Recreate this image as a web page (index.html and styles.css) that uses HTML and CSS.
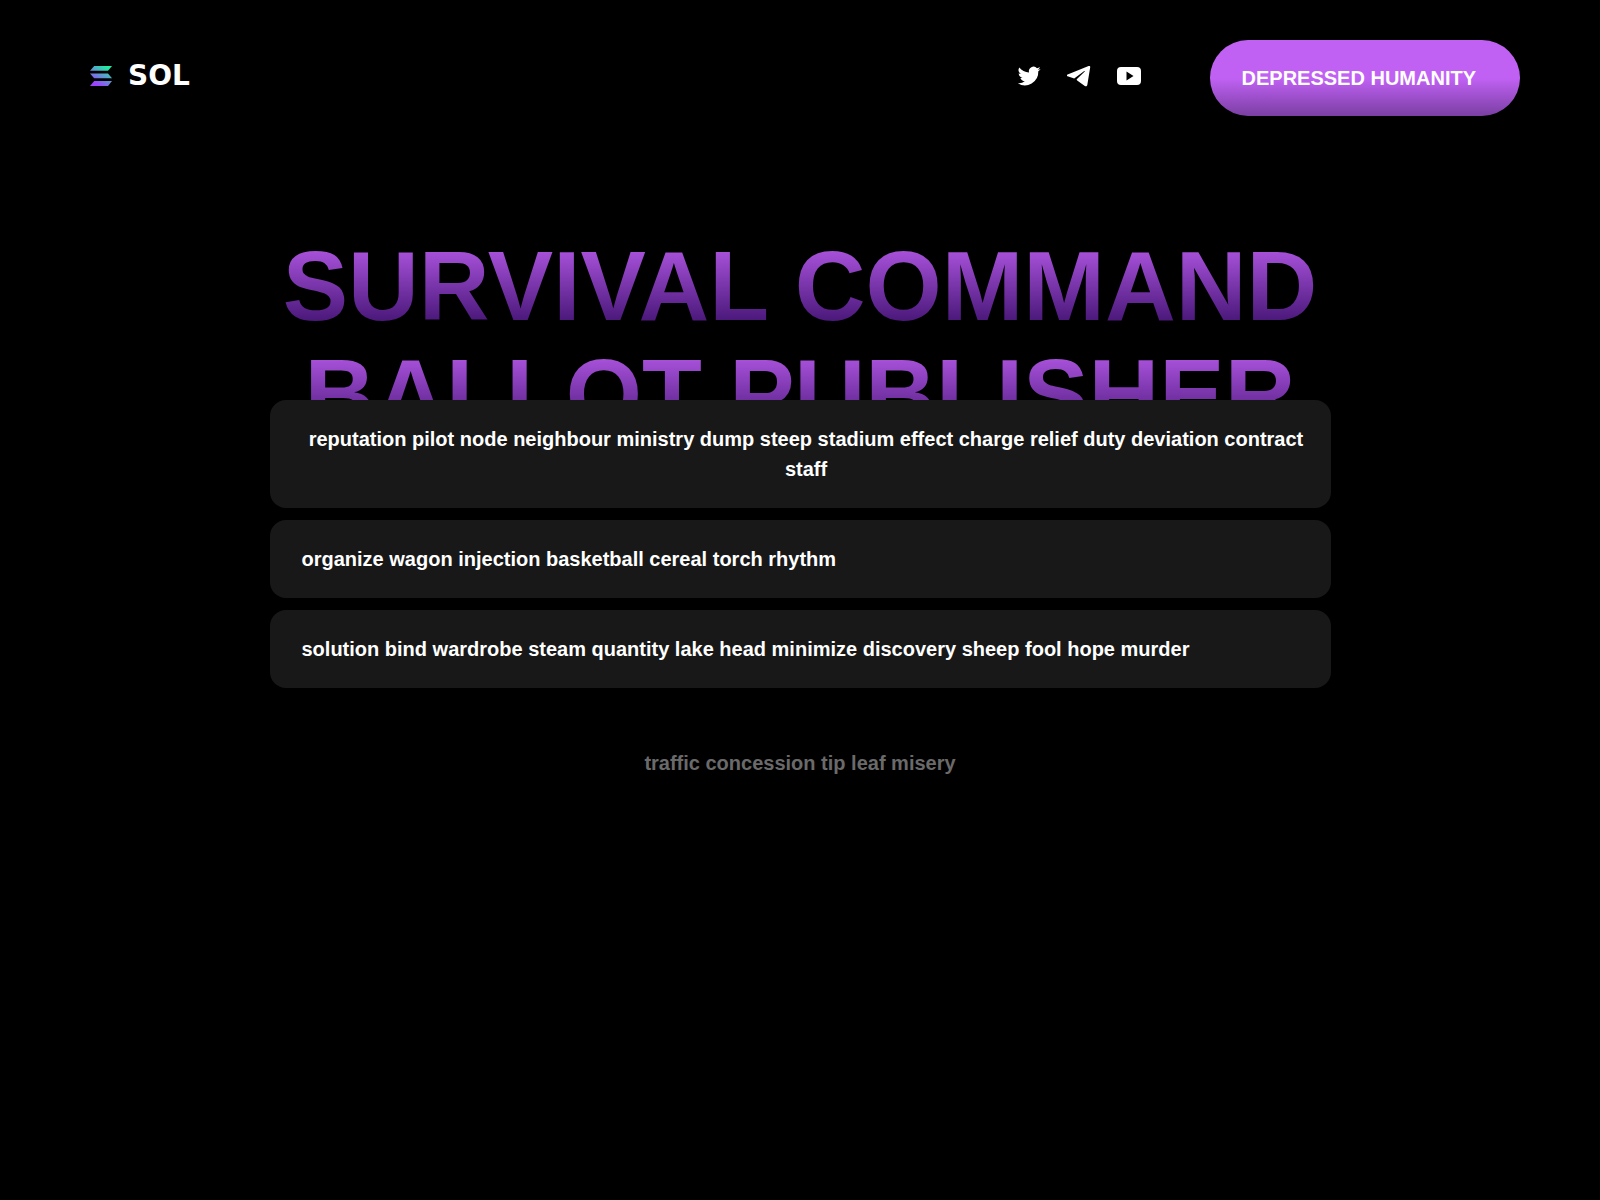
FILE: index.html
```html
<!DOCTYPE html>
<html lang="en">
<head>
  <meta charset="UTF-8" />
  <meta name="viewport" content="width=device-width, initial-scale=1.0"/>
  <title>SOL</title>
  <link rel="stylesheet" href="styles.css">
</head>
<body>
  <header class="header">
    <a href="#" class="logo">
      <svg class="logo-mark" viewBox="0 0 22 20" aria-hidden="true">
        <defs>
          <linearGradient id="solGradient" gradientUnits="userSpaceOnUse" x1="18" y1="1" x2="7" y2="18">
            <stop offset="0" stop-color="#1df0a0"/>
            <stop offset="1" stop-color="#9945ff"/>
          </linearGradient>
        </defs>
        <g fill="url(#solGradient)">
          <path d="M4.200 0H22L18 4.800H0z"/>
          <path d="M0 7.400H18L22 12.200H4.200z"/>
          <path d="M4.200 15H22L18 20H0z"/>
        </g>
      </svg>
      <span class="logo-text">SOL</span>
    </a>

    <div class="header-right">
      <nav class="socials">
        <a href="#" aria-label="Twitter">
          <svg viewBox="0 0 24 24"><path d="M23.6 4.9c-.8.4-1.7.6-2.7.8 1-.6 1.7-1.5 2.1-2.6-.9.5-1.9.9-3 1.1a4.700 4.700 0 0 0-8 4.300C8.100 8.300 4.600 6.400 2.300 3.500a4.700 4.700 0 0 0 1.500 6.300c-.8 0-1.500-.2-2.100-.6 0 2.300 1.600 4.300 3.800 4.700-.7.2-1.400.2-2.100.1.6 1.900 2.300 3.200 4.400 3.300A9.500 9.500 0 0 1 .8 19.200 13.400 13.400 0 0 0 21.300 7.300c.9-.6 1.700-1.500 2.300-2.400z"/></svg>
        </a>
        <a href="#" aria-label="Telegram">
          <svg viewBox="0 0 24 24"><path d="M21.600 2.100.6 10.400c-1.100.5-1 1.600 0 1.900L7.200 14.400 17.300 7c.5-.3.800 0 .4.500L10 14.900c-.5.600-.4 1.100.2 1.500l7.600 5.600c1.100.7 2.200.3 2.500-.9L23.200 3.200c.2-1-.7-1.500-1.600-1.100z"/></svg>
        </a>
        <a href="#" aria-label="YouTube">
          <svg viewBox="0 0 24 24"><path fill-rule="evenodd" d="M4 3h16a4 4 0 0 1 4 4v10a4 4 0 0 1-4 4H4a4 4 0 0 1-4-4V7a4 4 0 0 1 4-4zm5.500 4.500v9L16.500 12z"/></svg>
        </a>
      </nav>
      <button type="button" class="connect-btn">DEPRESSED HUMANITY</button>
    </div>
  </header>

  <main class="container">
    <h1 class="title"><span>SURVIVAL COMMAND BALLOT PUBLISHER</span></h1>

    <div class="options">
      <button type="button" class="option option-main">reputation pilot node neighbour ministry dump steep stadium effect charge relief duty deviation contract staff</button>
      <button type="button" class="option">organize wagon injection basketball cereal torch rhythm</button>
      <button type="button" class="option">solution bind wardrobe steam quantity lake head minimize discovery sheep fool hope murder</button>
    </div>

    <p class="note">traffic concession tip leaf misery</p>
  </main>
</body>
</html>
```
FILE: styles.css
```css
* {
  box-sizing: border-box;
}

body {
  background: #000;
  color: #fff;
  font-family: "Liberation Sans", Arial, sans-serif;
  font-size: 20px;
  font-weight: bold;
  line-height: 30px;
  margin: 0;
}

button {
  border: none;
  color: inherit;
  cursor: pointer;
  font: inherit;
}

.header {
  display: flex;
  align-items: center;
  justify-content: space-between;
  padding: 40px 80px 0 90px;
}

.logo {
  display: flex;
  align-items: center;
  gap: 16px;
  padding-bottom: 4px;
  color: #fff;
  text-decoration: none;
}

.logo-mark {
  width: 22px;
  height: 20px;
}

.logo-text {
  font-family: "DejaVu Sans", sans-serif;
  font-size: 28px;
}

.header-right {
  display: flex;
  align-items: center;
  gap: 69px;
}

.socials {
  display: flex;
  gap: 26px;
  padding-bottom: 4px;
}

.socials a {
  display: block;
  height: 24px;
}

.socials svg {
  display: block;
  width: 24px;
  height: 24px;
  fill: #fff;
}

.connect-btn {
  background: linear-gradient(180deg, #c161f4 50%, #7a3fa3 100%);
  border-radius: 38px;
  padding: 23px 44px 23px 32px;
}

.container {
  max-width: 1061px;
  margin: 0 auto;
  padding-top: 116px;
  text-align: center;
}

.title {
  font-size: 98px;
  line-height: 108px;
  margin: 0 0 -48px;
}

.title span {
  background: linear-gradient(180deg, #c161f4 0%, #30085f 100%);
  -webkit-background-clip: text;
  background-clip: text;
  color: transparent;
}

/* the cards cover the lower half of the title */
.options {
  display: flex;
  flex-direction: column;
  gap: 12px;
  position: relative;
}

.option {
  background: #181818;
  border-radius: 16px;
  padding: 24px 32px;
  text-align: left;
}

.option-main {
  padding-right: 20px;
  text-align: center;
}

.note {
  color: #6a6a6a;
  margin: 60px 0 0;
}
```
